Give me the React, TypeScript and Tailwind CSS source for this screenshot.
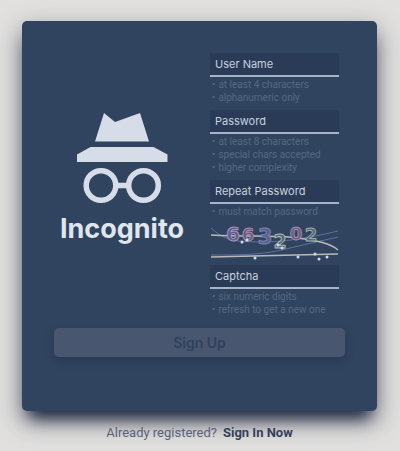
import React from 'react';

interface FieldProps {
  name: string;
  label: string;
  type?: string;
  hints: string[];
}

const Field: React.FC<FieldProps> = ({ name, label, type = 'text', hints }) => {
  return (
    <div className="pb-1.5">
      <input
        name={name}
        type={type}
        aria-label={label}
        aria-describedby={`${name}-hints`}
        placeholder={label}
        className="block w-full h-6 px-[5px] bg-[#293b57] border-b-2 border-[#a9b3c6] font-['Inter',sans-serif] text-[11px] text-[#d3dae6] placeholder:text-[#c9d1df] placeholder:opacity-100 outline-none"
      />
      <ul id={`${name}-hints`} className="pt-px pl-[2px] text-[10px] leading-[13px] text-[#566782]">
        {hints.map((hint) => (
          <li key={hint} className="flex gap-[3px] whitespace-nowrap">
            <span aria-hidden="true">•</span>
            {hint}
          </li>
        ))}
      </ul>
    </div>
  );
};

const Logo: React.FC = () => {
  return (
    <svg viewBox="0 0 92 92" className="w-[92px] h-[92px]" aria-hidden="true">
      <g fill="#d6dce8">
        <path d="M28 0 L39 9 L64 0 L73 28.500 H19 Z" />
        <path d="M14.500 34 H77.500 L91.500 41.500 V49 H1 V41.500 Z" />
      </g>
      <g fill="none" stroke="#d6dce8">
        <circle cx="25" cy="72.500" r="14.800" strokeWidth="5.500" />
        <circle cx="67.500" cy="72.500" r="14.800" strokeWidth="5.500" />
        <path d="M39 72.500 H53" strokeWidth="5.500" />
      </g>
    </svg>
  );
};

const digits = [
  { char: '6', x: 23, y: 17, size: 20, color: '#b391c4' },
  { char: '6', x: 38, y: 17, size: 18, color: '#b487a6' },
  { char: '3', x: 55, y: 20, size: 21, color: '#7d83b8' },
  { char: '2', x: 70, y: 24, size: 19, color: '#a5bfa9' },
  { char: '0', x: 86, y: 16, size: 18, color: '#b388ad' },
  { char: '2', x: 101, y: 17, size: 18, color: '#93b59c' },
];

const specks = [
  [32, 18],
  [37, 16],
  [68, 21],
  [72, 24],
  [45, 34],
  [88, 33],
  [105, 30],
  [109, 35],
  [117, 33],
];

const Captcha: React.FC = () => {
  return (
    <svg viewBox="0 0 129 41" className="block w-full h-[41px] overflow-visible" role="img" aria-label="Captcha code">
      <g fill="none" stroke="#6070a0" strokeWidth="1">
        <path d="M1 4 C8 10 12 14 28 17 C60 20 92 16 128 7" />
        <path d="M1 31 C30 31 55 31 80 24 L128 13" />
      </g>
      <g fill="none" stroke="#b9bab8" strokeWidth="1.500">
        <path d="M1 11 C40 13 65 11 88 14 C108 17 120 19 128 26" />
        <path d="M1 33 L128 30" />
      </g>
      {digits.map((d, i) => (
        <text
          key={i}
          x={d.x}
          y={d.y}
          fontSize={d.size}
          fill="#5b6288"
          stroke={d.color}
          strokeWidth="0.900"
          textAnchor="middle"
          className="font-['DejaVu_Sans',sans-serif] font-bold"
        >
          {d.char}
        </text>
      ))}
      {specks.map(([x, y], i) => (
        <circle key={i} cx={x} cy={y} r="1.500" fill="#d5dce6" />
      ))}
    </svg>
  );
};

export default function App() {
  return (
    <main className="min-h-screen bg-[#e1e0df] pl-[22px] pr-[23px] pt-[21px] font-['Roboto',sans-serif]">
      <form
        onSubmit={(e) => e.preventDefault()}
        className="rounded-[5px] bg-[#30445f] px-8 pt-8 pb-[54px] shadow-[0_10px_24px_rgba(30,35,55,0.6),0_14px_14px_-8px_#26334d]"
      >
        <div className="flex gap-5">
          <div className="flex flex-1 flex-col items-center justify-center pb-4">
            <Logo />
            <h1 className="mt-1.5 font-['Inter',sans-serif] text-[27px] leading-9 font-bold text-[#dfe6ef]">
              Incognito
            </h1>
          </div>
          <div className="w-[129px] mr-1.5">
            <Field name="username" label="User Name" hints={['at least 4 characters', 'alphanumeric only']} />
            <Field
              name="password"
              label="Password"
              type="password"
              hints={['at least 8 characters', 'special chars accepted', 'higher complexity']}
            />
            <Field name="repeat" label="Repeat Password" type="password" hints={['must match password']} />
            <Captcha />
            <Field name="captcha" label="Captcha" hints={['six numeric digits', 'refresh to get a new one']} />
          </div>
        </div>
        <button
          type="submit"
          className="mt-1.5 block h-[29px] w-full rounded-[5px] bg-[#48576f] font-['Inter',sans-serif] text-[14px] font-semibold text-[#30415d] shadow-[0_4px_8px_rgba(25,38,62,0.35)]"
        >
          Sign Up
        </button>
      </form>
      <p className="mt-3 text-center text-[13px] leading-5 text-[#59627a]">
        Already registered?
        <a href="#signin" className="ml-1.5 font-bold text-[#353f5c]">
          Sign In Now
        </a>
      </p>
    </main>
  );
}
